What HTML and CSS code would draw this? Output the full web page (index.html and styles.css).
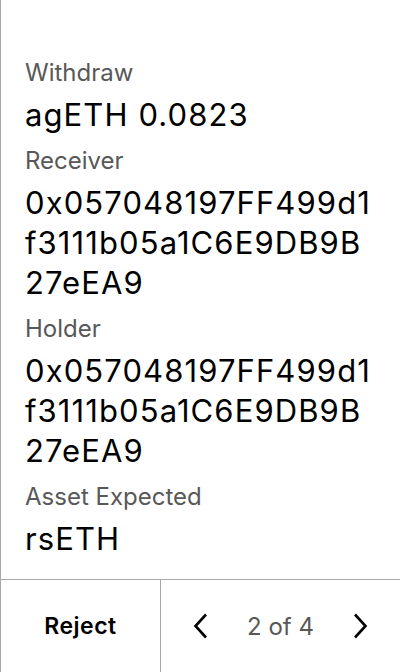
FILE: index.html
```html
<!DOCTYPE html>
<html>
<head>
<meta charset="utf-8">
<link rel="stylesheet" href="styles.css">
</head>
<body>
<div class="screen">
  <div class="content">
    <div class="field">
      <div class="label">Withdraw</div>
      <div class="value">agETH 0.0823</div>
    </div>
    <div class="field">
      <div class="label">Receiver</div>
      <div class="value">0x057048197FF499d1<br>f3111b05a1C6E9DB9B<br>27eEA9</div>
    </div>
    <div class="field">
      <div class="label">Holder</div>
      <div class="value">0x057048197FF499d1<br>f3111b05a1C6E9DB9B<br>27eEA9</div>
    </div>
    <div class="field">
      <div class="label">Asset Expected</div>
      <div class="value">rsETH</div>
    </div>
  </div>
  <div class="footer">
    <div class="reject">Reject</div>
    <div class="pager">
      <svg class="chev" width="20" height="28" viewBox="0 0 20 28"><path d="M15 2.5 L4.5 14 L15 25.5" fill="none" stroke="#000" stroke-width="2.6"/></svg>
      <span class="count">2 of 4</span>
      <svg class="chev" width="20" height="28" viewBox="0 0 20 28"><path d="M5 2.5 L15.5 14 L5 25.5" fill="none" stroke="#000" stroke-width="2.6"/></svg>
    </div>
  </div>
</div>
</body>
</html>
```
FILE: styles.css
```css
html, body { margin: 0; padding: 0; background: #fff; }
body { font-family: Inter, "Noto Sans", sans-serif; color: #000; }
.screen {
  width: 400px; height: 672px; box-sizing: border-box;
  border-left: 1px solid #a8a8a8;
  display: flex; flex-direction: column;
}
.content { flex: 1; padding: 57px 0 0 24px; display: flex; flex-direction: column; gap: 10px; }
.field { display: flex; flex-direction: column; gap: 6px; }
.label { font-size: 24px; line-height: 32px; color: #585858; }
.value { font-size: 31px; line-height: 40px; letter-spacing: 1.1px; color: #000; }
.footer { height: 92px; border-top: 1px solid #a8a8a8; display: flex; }
.reject { width: 159px; border-right: 1px solid #a8a8a8; display: flex; align-items: center; justify-content: center; font-size: 23px; font-weight: 600; letter-spacing: 0.5px; }
.pager { flex: 1; display: flex; align-items: center; justify-content: space-between; padding: 0 30px 0 30px; }
.count { font-size: 24px; color: #585858; }
```
